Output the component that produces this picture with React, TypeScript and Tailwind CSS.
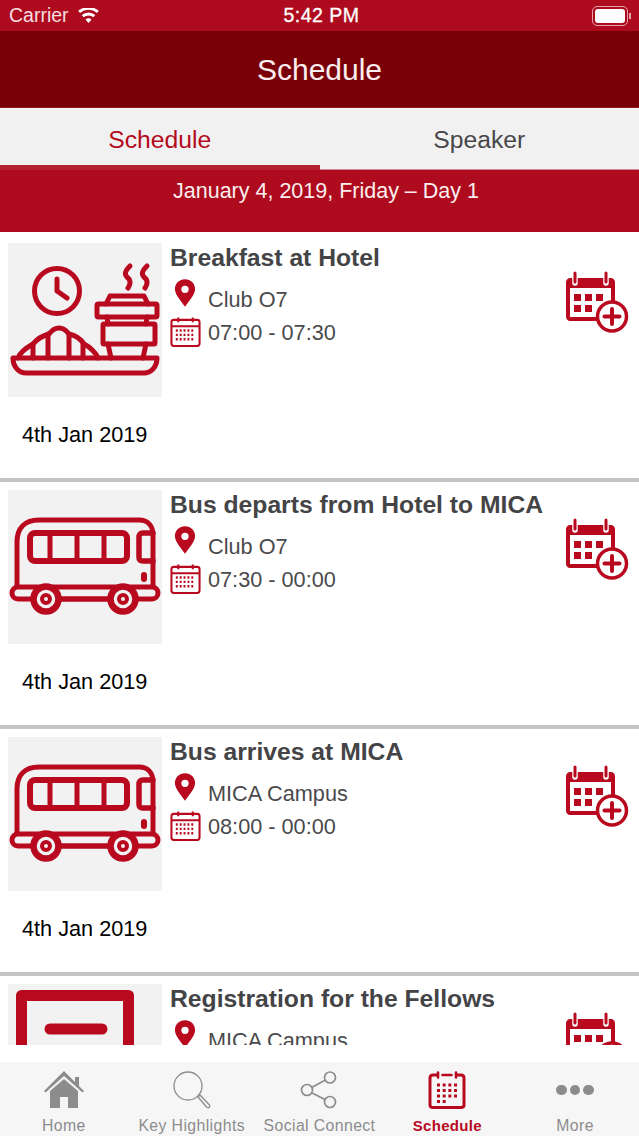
const RED = "#b8091f";

const BreakfastIcon = () => (
  <svg viewBox="0 0 154 154" className="w-[154px] h-[154px]" fill="none" stroke={RED} strokeWidth="5" strokeLinecap="round" strokeLinejoin="round">
    <circle cx="49" cy="48" r="22.500" />
    <path d="M49 36v12l10 7" />
    <path d="M122 23c-6 6-6 9-1 13 2 3 1 6-1 9M139 23c-6 6-6 9-1 13 2 3 1 6-1 9" />
    <path d="M98 61l4-8h34l4 8" />
    <rect x="89" y="61" width="60" height="13" rx="1.500" />
    <path d="M99 74l1 7M139 74l-1 7" />
    <rect x="95" y="81" width="52" height="20" rx="1" />
    <path d="M100 101l3 14M138 101l-3 14" />
    <path d="M10 115c2-6 8-10 15-14 5-6 12-9 16-10 3-4 7-6 10-6s7 2 10 6c5 1 11 4 15 10 6 3 12 9 14 14" />
    <path d="M25 101v14M40 91v24M61 91v24M75 101v14" />
    <path d="M5 115h144c0 9-6 15-13 15H18c-7 0-13-6-13-15z" />
  </svg>
);

const BusIcon = () => (
  <svg viewBox="0 0 154 154" className="w-[154px] h-[154px]" fill="none" stroke={RED} strokeWidth="5" strokeLinecap="round" strokeLinejoin="round">
    <path d="M9 98V52c0-14 8-22 22-22h100c9 0 14 6 14 15v53" />
    <rect x="22" y="43" width="97" height="28" rx="5" strokeWidth="6" />
    <path d="M42 43v28M69 43v28M96 43v28" />
    <path d="M145 43h-10c-3 0-4 2-4 4v20c0 3 1 4 4 4h10" strokeWidth="5.500" />
    <path d="M136 85v4" strokeWidth="6" />
    <rect x="4" y="97" width="146" height="12" rx="6" fill="#f2f2f3" />
    <path d="M38 109h77" strokeWidth="5" />
    <circle cx="38" cy="109" r="12.500" fill="#f2f2f3" strokeWidth="6.500" />
    <circle cx="115" cy="109" r="12.500" fill="#f2f2f3" strokeWidth="6.500" />
    <circle cx="38" cy="109" r="4" strokeWidth="4" />
    <circle cx="115" cy="109" r="4" strokeWidth="4" />
  </svg>
);

const RegistrationIcon = () => (
  <svg viewBox="0 0 154 154" className="w-[154px] h-[154px]" fill="none" stroke={RED} strokeWidth="11" strokeLinecap="round" strokeLinejoin="round">
    <path d="M13.500 100V11.500h107V100" />
    <path d="M42 45h52" />
  </svg>
);

const Pin = () => (
  <svg viewBox="0 0 24 32" className="w-[22px] h-[30px]">
    <path fillRule="evenodd" fill={RED} d="M12 1C5.600 1 1 5.700 1 11.600 1 18 8 25 12 31c4-6 11-13 11-19.400C23 5.700 18.400 1 12 1zm0 7a4 4 0 1 1 0 8 4 4 0 0 1 0-8z" />
  </svg>
);

const SmallCalendar = () => (
  <svg viewBox="0 0 32 32" className="w-[31px] h-[31px]" fill="none" stroke={RED} strokeWidth="2.100">
    <rect x="1.500" y="4" width="29" height="27" rx="2.500" />
    <path d="M1.500 10.500h29M8.500 1.500v5M23.500 1.500v5" />
    <path d="M6 15h20M6 19.500h20M6 24h20" strokeWidth="2.400" strokeDasharray="2 2" />
  </svg>
);

const AddCalendar = () => (
  <svg viewBox="0 0 64 62" className="w-[64px] h-[62px]">
    <path fill={RED} d="M1 11c0-2 2-4 4-4h41c2 0 4 2 4 4v28h-4V17H5v29h30v4H5c-2 0-4-2-4-4z" />
    <path d="M10 2v10M41 2v10" stroke="#fff" strokeWidth="5.500" strokeLinecap="round" />
    <path d="M10 2v9M41 2v9" stroke={RED} strokeWidth="3" strokeLinecap="round" />
    <path fill={RED} d="M9 23h7v7H9zM20 23h7v7h-7zM31 23h7v7h-7zM9 34h7v7H9zM20 34h7v7h-7z" />
    <circle cx="47" cy="45.500" r="14.500" fill="#fff" stroke={RED} strokeWidth="3.500" />
    <path d="M47 38v15M39.500 45.500h15" stroke={RED} strokeWidth="4" strokeLinecap="round" />
  </svg>
);

const HomeIcon = () => (
  <svg viewBox="0 0 40 38" className="w-[40px] h-[38px]" fill="#8c8c8c">
    <path d="M20 0L0 20l1.500 1.500L20 5l18.500 16.500L40 20l-5-5V6h-4v5z" />
    <path d="M20 8L6 20v17h10V26h8v11h10V20z" />
  </svg>
);

const LensIcon = () => (
  <svg viewBox="0 0 38 38" className="w-[38px] h-[38px]" fill="none" stroke="#8c8c8c">
    <circle cx="15" cy="15" r="14" strokeWidth="1.300" />
    <path d="M25 26l2-2 9.500 10c1 1.500-1 3.500-2.500 2.500z" strokeWidth="1.300" strokeLinejoin="round" />
  </svg>
);

const ShareIcon = () => (
  <svg viewBox="0 0 38 38" className="w-[38px] h-[38px]" fill="none" stroke="#8c8c8c" strokeWidth="1.700">
    <circle cx="30" cy="6.500" r="5.500" />
    <circle cx="7" cy="19" r="5.500" />
    <circle cx="30" cy="31" r="5.500" />
    <path d="M12 16.200l13-7M12 22l13 6.500" />
  </svg>
);

const TabCalendar = () => (
  <svg viewBox="0 0 38 38" className="w-[38px] h-[38px]" fill="none">
    <path d="M11 4H5C3 4 2 5.500 2 7v27c0 1.500 1 2.500 3 2.500h28c2 0 3-1 3-2.500V7c0-1.500-1-3-3-3h-6" stroke={RED} strokeWidth="3" />
    <path d="M10 1.500v5M28 1.500v5M14.500 4h9" stroke={RED} strokeWidth="2.600" strokeLinecap="round" />
    <path d="M9 14h20M9 19.500h20M9 25h20" stroke={RED} strokeWidth="3" strokeDasharray="3 2.670" />
    <path d="M9 30.500h9" stroke={RED} strokeWidth="3" strokeDasharray="3 2.670" />
  </svg>
);

const events = [
  { title: "Breakfast at Hotel", place: "Club O7", time: "07:00 - 07:30", icon: <BreakfastIcon /> },
  { title: "Bus departs from Hotel to MICA", place: "Club O7", time: "07:30 - 00:00", icon: <BusIcon /> },
  { title: "Bus arrives at MICA", place: "MICA Campus", time: "08:00 - 00:00", icon: <BusIcon /> },
  { title: "Registration for the Fellows", place: "MICA Campus", time: "08:00 - 09:00", icon: <RegistrationIcon /> },
];

const EventCard = ({ title, place, time, icon }: (typeof events)[number]) => (
  <div className="h-[247px] shrink-0 border-b-[4px] border-[#c4c3c6] bg-white flex relative">
    <div className="w-[170px] pl-2 pt-[8px] shrink-0">
      <div className="w-[154px] h-[154px] bg-[#f2f2f3] overflow-hidden">{icon}</div>
      <div className="pl-[14px] pt-[23px] text-[21.700px] leading-[30px] text-black">4th Jan 2019</div>
    </div>
    <div className="pt-[8px]">
      <div className="text-[24.700px] leading-[30px] font-bold text-[#444446] whitespace-nowrap">{title}</div>
      <div className="flex items-center h-[36px] mt-[9px] text-[21.700px] text-[#4a4a4c]">
        <span className="w-[38px] pl-[4px] -mt-[14px]"><Pin /></span>
        <span className="leading-[30px]">{place}</span>
      </div>
      <div className="flex items-center h-[30px] text-[21.700px] text-[#4a4a4c]">
        <span className="w-[38px] -mt-[3px]"><SmallCalendar /></span>
        <span className="leading-[30px]">{time}</span>
      </div>
    </div>
    <div className="absolute right-[10px] top-[36px]"><AddCalendar /></div>
  </div>
);

const TabItem = ({ label, active, children }: { label: string; active?: boolean; children: React.ReactNode }) => (
  <div className="flex-1 flex flex-col items-center">
    <div className="h-[38px] flex items-center justify-center">{children}</div>
    <div className={`mt-[7px] leading-[20px] whitespace-nowrap ${active ? "text-[15px] tracking-[0.3px] text-[#b8091f] font-bold" : "text-[15.800px] tracking-[0.4px] text-[#8c8c8c]"}`}>{label}</div>
  </div>
);

export default function App() {
  return (
    <div className="w-[639px] h-[1136px] flex flex-col overflow-hidden bg-white font-['Liberation_Sans',Arial,sans-serif]">
      <div className="h-[31px] shrink-0 bg-[#ae0b1f] text-white flex items-center justify-between pl-[9px] pr-[8px] relative">
        <div className="flex items-center gap-[9px] text-[19.500px] leading-none">
          <span className="text-[#f5dde0]">Carrier</span>
          <svg viewBox="0 0 22 16" className="w-[21px] h-[15px]" fill="#fff">
            <path d="M11 16l-3.200-3.800a5 5 0 0 1 6.400 0zM5.800 9.800l-2-2.300a11 11 0 0 1 14.400 0l-2 2.300a8 8 0 0 0-10.400 0zM1.900 5.300L0 3a17 17 0 0 1 22 0l-1.900 2.300a14 14 0 0 0-18.200 0z" />
          </svg>
        </div>
        <div className="absolute left-[4px] right-0 text-center text-[19.500px] leading-none tracking-[0.5px] [-webkit-text-stroke:0.3px_white]">5:42 PM</div>
        <div className="flex items-center">
          <div className="w-[36px] h-[20px] rounded-[5px] border border-[#e2a3ab] p-[2px]">
            <div className="w-full h-full bg-white rounded-[3px]" />
          </div>
          <div className="w-[2px] h-[6px] bg-[#e2a3ab] ml-px" />
        </div>
      </div>

      <div className="h-[77px] shrink-0 bg-[#7a0008] text-[#fbeeee] flex items-center justify-center text-[30px] border-b border-[#8a1c22]">Schedule</div>

      <div className="h-[62px] shrink-0 bg-[#f2f1f2] flex relative border-b border-[#c98a92]">
        <div className="w-1/2 flex justify-center pt-[15px] text-[24.700px] leading-[34px] text-[#b40a20]">Schedule</div>
        <div className="w-1/2 flex justify-center pt-[15px] text-[24.700px] leading-[34px] text-[#47474a]">Speaker</div>
        <div className="absolute left-0 -bottom-px w-1/2 h-[5px] bg-[#b4212f]" />
      </div>

      <div className="h-[62px] shrink-0 bg-[#ae0b1f] text-[#fbeeee] text-center text-[21.500px] leading-[30px] pt-[6px] pl-[13px]">January 4, 2019, Friday – Day 1</div>

      <div className="h-[813px] shrink-0 overflow-hidden flex flex-col pt-[3px]">
        {events.map((e) => (
          <EventCard key={e.title} {...e} />
        ))}
      </div>

      <div className="h-[17px] shrink-0 bg-white" />

      <div className="h-[74px] shrink-0 bg-[#f6f6f7] flex pt-[9px]">
        <TabItem label="Home"><HomeIcon /></TabItem>
        <TabItem label="Key Highlights"><LensIcon /></TabItem>
        <TabItem label="Social Connect"><ShareIcon /></TabItem>
        <TabItem label="Schedule" active><TabCalendar /></TabItem>
        <TabItem label="More">
          <div className="flex gap-[3px]">
            <span className="w-[10.500px] h-[10.500px] rounded-full bg-[#8c8c8c]" />
            <span className="w-[10.500px] h-[10.500px] rounded-full bg-[#8c8c8c]" />
            <span className="w-[10.500px] h-[10.500px] rounded-full bg-[#8c8c8c]" />
          </div>
        </TabItem>
      </div>
    </div>
  );
}
